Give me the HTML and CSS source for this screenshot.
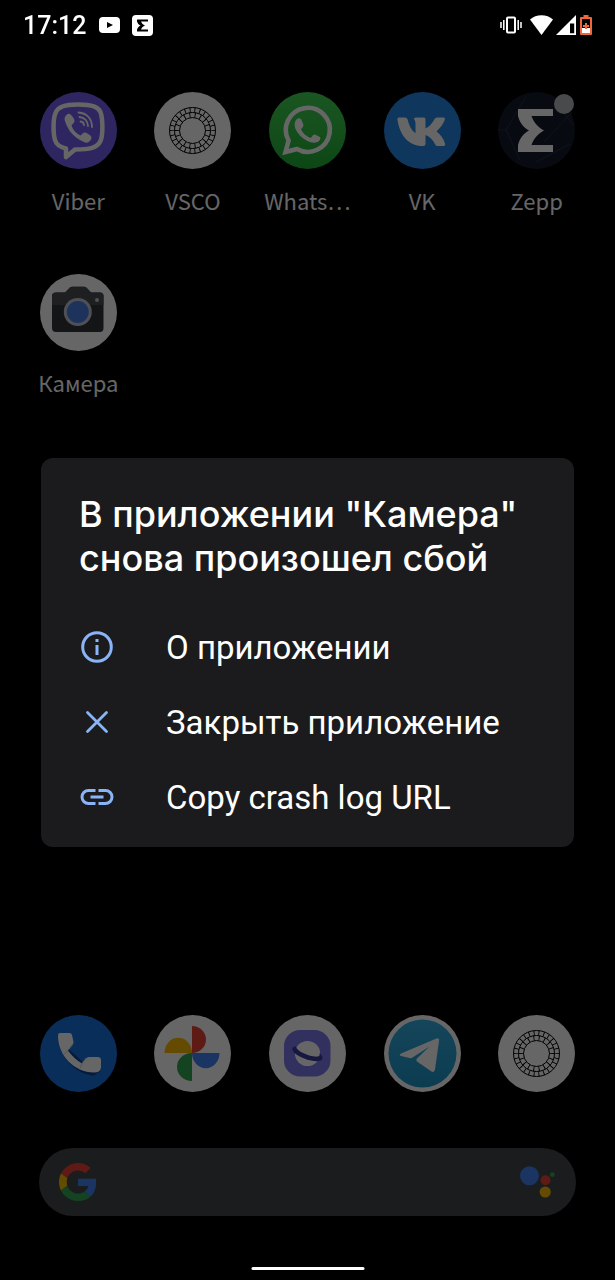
FILE: index.html
```html
<!DOCTYPE html>
<html lang="ru">
<head>
  <meta charset="UTF-8">
  <meta name="viewport" content="width=device-width, initial-scale=1">
  <title>Камера</title>
  <link rel="stylesheet" href="styles.css">
</head>
<body>
  <!-- shared shapes -->
  <svg class="defs" width="0" height="0" aria-hidden="true">
    <symbol id="vsco" viewBox="0 0 77 77">
      <circle cx="38.5" cy="38.5" r="38.5" fill="#fff"/>
      <g fill="none" stroke="#000" stroke-width="1">
        <circle cx="38.5" cy="38.5" r="23"/>
        <circle cx="38.5" cy="38.5" r="18"/>
        <circle cx="38.5" cy="38.5" r="13"/>
        <circle cx="38.5" cy="38.5" r="20.5" stroke-width="5" pathLength="260" stroke-dasharray="1.8 8.2" stroke-dashoffset="0.9"/>
        <circle cx="38.5" cy="38.5" r="15.5" stroke-width="5" pathLength="180" stroke-dasharray="1.7 8.3" stroke-dashoffset="0.8"/>
      </g>
    </symbol>
  </svg>

  <div class="home">
    <main class="apps">
      <button class="app">
        <svg class="icon" viewBox="0 0 77 77" aria-hidden="true">
          <circle cx="38.5" cy="38.5" r="38.5" fill="#7360f2"/>
          <path d="M38 12.500C53 12.500 58 15 60.500 20C63 27 63 43 60.500 49C57 56 50 57.500 35 57.500L26 65V56.500C20 55 16 52 15 48C13 41 13 27 15.500 21C18 15 24 12.500 38 12.500Z" fill="none" stroke="#fff" stroke-width="4.500" stroke-linejoin="round"/>
          <path d="M27 22.500C29 21 31 22 34 27C35.500 30 33 31.500 31.500 33.500C33 38 36 41.500 40.500 43.500C42.500 42 43.500 39.500 46.500 41C52 44 52 45.500 51 47.500C49.500 50.500 46.500 51.500 44 50C34 46 28 38.500 24.800 28.500C24 26 25 24 27 22.500Z" fill="#fff"/>
          <g fill="none" stroke="#fff" stroke-width="1.800" stroke-linecap="round">
            <path d="M38.500 20.500C46.500 21 52 26.500 52 35"/>
            <path d="M39.500 25C44.500 25.500 47.800 29 48 34"/>
            <path d="M40.500 29.500C42.800 29.700 43.800 31 44 33"/>
          </g>
        </svg>
        <span class="label">Viber</span>
      </button>
      <button class="app">
        <svg class="icon" aria-hidden="true"><use href="#vsco"/></svg>
        <span class="label">VSCO</span>
      </button>
      <button class="app">
        <svg class="icon" viewBox="0 0 77 77" aria-hidden="true">
          <defs>
            <linearGradient id="wa" x1="0" y1="0" x2="0" y2="1">
              <stop offset="0" stop-color="#43d854"/>
              <stop offset="1" stop-color="#22b038"/>
            </linearGradient>
          </defs>
          <circle cx="38.5" cy="38.5" r="38.5" fill="url(#wa)"/>
          <path d="M16.500 60L19.600 48.500A22 22 0 1 1 28 57Z" fill="none" stroke="#fff" stroke-width="4.600"/>
          <path d="M28 27C30 25.500 32 26.500 32.500 28L34.500 33C34.500 35 32.500 36 32 37.500C34 41.500 37.500 44.500 41.500 46C43.500 44.500 44 42 46 42.500L51 45C52 46 51 49 48.500 50C45 51.500 42 50.500 38.500 49C32.500 46 28.500 41 26.500 37C25 33 25.500 29 28 27Z" fill="#fff"/>
        </svg>
        <span class="label">Whats…</span>
      </button>
      <button class="app">
        <svg class="icon" viewBox="0 0 77 77" aria-hidden="true">
          <circle cx="38.5" cy="38.5" r="38.5" fill="#2787e5"/>
          <path d="M15 25.500H21Q23 25.500 23.600 27.500C25.500 35 28.500 39.500 31.500 41V31Q31.300 28 29.800 27Q30 25.500 32 25.500H40Q41.500 25.500 41.500 27.500V36.500C45 35 48.500 31 50.500 27Q51.200 25.500 53 25.500H59.500Q61.500 25.500 60.800 27.500C59.500 32 56 36 52.500 39.500C56 42 59.500 46.500 61 51.500Q61.800 54 59.500 54H53.500Q52 54 51.200 52.500C49 48 46 44.500 41.500 43V52Q41.500 54 39.500 54C26 54.500 16 45 13.400 27.500Q13.200 25.500 15 25.500Z" fill="#fff"/>
        </svg>
        <span class="label">VK</span>
      </button>
      <button class="app">
        <svg class="icon" viewBox="0 0 77 77" aria-hidden="true">
          <circle cx="38.5" cy="38.5" r="38.5" fill="#151b2c"/>
          <path d="M0 38H8L28 5M46 50L74 20M38 70L72 52M8 38L22 68M58 10L76 34" fill="none" stroke="#273047"/>
          <path d="M20 17H55V24H33.500C36 31 40 35 46 38.500C40 42 36 46 33.500 53H55V60H20V53C22 46 25 42 31 38.500C25 35 22 31 20 24Z" fill="#fff"/>
        </svg>
        <span class="dot"></span>
        <span class="label">Zepp</span>
      </button>
      <button class="app">
        <svg class="icon" viewBox="0 0 77 77" aria-hidden="true">
          <circle cx="38.5" cy="38.5" r="38.5" fill="#fff"/>
          <path d="M16 18.500H25L30 13.500Q31 12.800 32 12.800H44Q45.500 12.800 46.500 13.800L51 18.500H60Q63.500 18.500 63.500 22V54Q63.500 58 60 58H16Q12 58 12 54V22Q12 18.500 16 18.500Z" fill="#33363b"/>
          <path d="M16 18.500H25L30 13.500Q31 12.800 32 12.800H44Q45.500 12.800 46.500 13.800L51 18.500H60Q63.500 18.500 63.500 22V31H12V22Q12 18.500 16 18.500Z" fill="#4a4e53"/>
          <circle cx="37.800" cy="38" r="14" fill="#c3c9d4"/>
          <circle cx="37.800" cy="38" r="11" fill="#4a80e4"/>
          <circle cx="57" cy="26" r="2" fill="#c3c9d4"/>
        </svg>
        <span class="label">Камера</span>
      </button>
    </main>

    <nav class="dock" aria-label="Избранное">
      <button class="app" aria-label="Телефон">
        <svg class="icon" viewBox="0 0 77 77" aria-hidden="true">
          <circle cx="38.5" cy="38.5" r="38.5" fill="#1a73e0"/>
          <path d="M18 24C20 42 36 60 54 60.500L61 56L45 49Z" fill="#0d4796"/>
          <path d="M20 18H29.500Q31.500 18 32 20L33.500 27Q33.700 28.500 32.500 29.500L27.800 35.500C32 41 36 45 42 48.500L46 43.500Q47 42 49 42H57.500Q61 42 61 45V52Q61 57.500 54 57.500C34 57.500 18 40 18 21Q18 18 20 18Z" fill="#fff"/>
          <path d="M33 29L27.800 35.500L24.500 39M46 43L42 48.500L40 53" fill="none" stroke="#c9d3de"/>
        </svg>
      </button>
      <button class="app" aria-label="Google Фото">
        <svg class="icon" viewBox="0 0 77 77" aria-hidden="true">
          <circle cx="38.5" cy="38.5" r="38.5" fill="#fff"/>
          <path d="M38 11A14 13.500 0 0 1 38 38Z" fill="#ea4335"/>
          <path d="M38 38A13.500 15 0 0 0 10.500 38Z" fill="#fbbc04"/>
          <path d="M38 38A13.500 15 0 0 0 65.500 38Z" fill="#4285f4"/>
          <path d="M38 38A15 14 0 0 0 38 66Z" fill="#34a853"/>
        </svg>
      </button>
      <button class="app" aria-label="Интернет">
        <svg class="icon" viewBox="0 0 77 77" aria-hidden="true">
          <circle cx="38.5" cy="38.5" r="38.5" fill="#fff"/>
          <rect x="15" y="15" width="46.500" height="46.500" rx="16" fill="#7a78ee"/>
          <circle cx="38.500" cy="38.500" r="12.600" fill="#fff"/>
          <path d="M27 31.500C22 31 21.500 36 29 40.500C38 46 52.500 48.500 53.500 43.500Q53.800 41 50.500 38C51.500 41.500 49 42 45.500 41.500C38 40.500 27.500 36 27 31.500Z" fill="#3b3c9e"/>
        </svg>
      </button>
      <button class="app" aria-label="Telegram">
        <svg class="icon" viewBox="0 0 77 77" aria-hidden="true">
          <defs>
            <linearGradient id="tg" x1="0" y1="0" x2="0" y2="1">
              <stop offset="0" stop-color="#37aee2"/>
              <stop offset="1" stop-color="#1e96c8"/>
            </linearGradient>
          </defs>
          <circle cx="38.5" cy="38.5" r="38.5" fill="#fff"/>
          <circle cx="38.5" cy="38.500" r="34" fill="url(#tg)"/>
          <path d="M17 38.500L52.500 23.500Q55.500 22.500 55 26L51 54.500Q50.300 58 47.500 56.500L33 46.500Q31.500 45 33 43.500L45.500 31.500L28.500 42.500Q27 43.500 25.500 43L17 41Q14.500 40 17 38.500Z" fill="#fff"/>
        </svg>
      </button>
      <button class="app" aria-label="VSCO">
        <svg class="icon" aria-hidden="true"><use href="#vsco"/></svg>
      </button>
    </nav>

    <div class="search">
      <button aria-label="Google Поиск">
        <svg width="38" height="38" viewBox="0 0 48 48" aria-hidden="true">
          <path fill="#ea4335" d="M24 9.500c3.540 0 6.710 1.220 9.210 3.600l6.850-6.850C35.900 2.380 30.470 0 24 0 14.620 0 6.510 5.380 2.560 13.220l7.980 6.190C12.430 13.720 17.740 9.500 24 9.500z"/>
          <path fill="#4285f4" d="M46.980 24.550c0-1.570-.15-3.090-.38-4.550H24v9.020h12.940c-.58 2.960-2.260 5.480-4.780 7.180l7.730 6c4.510-4.180 7.090-10.360 7.090-17.650z"/>
          <path fill="#fbbc05" d="M10.530 28.590c-.48-1.450-.76-2.990-.76-4.590s.27-3.140.76-4.590l-7.980-6.190C.92 16.460 0 20.120 0 24c0 3.880.92 7.540 2.560 10.780l7.970-6.190z"/>
          <path fill="#34a853" d="M24 48c6.480 0 11.930-2.130 15.890-5.810l-7.730-6c-2.150 1.450-4.920 2.300-8.160 2.300-6.260 0-11.570-4.220-13.470-9.910l-7.980 6.190C6.510 42.620 14.620 48 24 48z"/>
        </svg>
      </button>
      <button aria-label="Google Ассистент">
        <svg width="36" height="36" viewBox="0 0 36 36" aria-hidden="true">
          <circle cx="9.500" cy="11.700" r="9.500" fill="#4285f4"/>
          <circle cx="25.500" cy="16.300" r="5" fill="#ea4335"/>
          <circle cx="32.300" cy="10.700" r="2.400" fill="#34a853"/>
          <circle cx="25.200" cy="28" r="5.600" fill="#fbbc04"/>
        </svg>
      </button>
    </div>
  </div>

  <div class="scrim">
    <section class="dialog" role="dialog" aria-labelledby="dialog-title">
      <h1 id="dialog-title">В приложении "Камера" снова произошел сбой</h1>
      <button class="action">
        <svg viewBox="0 0 36 36" aria-hidden="true">
          <circle cx="18" cy="18" r="14.300" fill="none" stroke="#8ab4f8" stroke-width="3"/>
          <path d="M16.500 10h3v3h-3zM16.500 16h3v10h-3z" fill="#8ab4f8"/>
        </svg>
        О приложении
      </button>
      <button class="action">
        <svg viewBox="0 0 36 36" aria-hidden="true">
          <path d="M8.500 8.500l19 19M27.500 8.500l-19 19" stroke="#8ab4f8" stroke-width="2.800" stroke-linecap="round"/>
        </svg>
        Закрыть приложение
      </button>
      <button class="action">
        <svg viewBox="0 0 36 36" aria-hidden="true">
          <path d="M16.500 11.500H9.500a6.500 6.500 0 0 0 0 13H16.500M19.500 11.500H26.500a6.500 6.500 0 0 1 0 13H19.500M11.500 18H24.500" fill="none" stroke="#8ab4f8" stroke-width="3"/>
        </svg>
        Copy crash log URL
      </button>
    </section>
  </div>

  <header class="status">
    <time>17:12</time>
    <svg width="21" height="16" viewBox="0 0 21 16" aria-hidden="true">
      <rect width="21" height="16" rx="4" fill="#fff"/>
      <path d="M8 5l6 3-6 3z" fill="#000"/>
    </svg>
    <svg class="zepp" width="21" height="21" viewBox="0 0 21 21" aria-hidden="true">
      <rect width="21" height="21" rx="4" fill="#fff"/>
      <path d="M5 4.500h11v2h-7c.8 2 2 3.200 4 4-2 .8-3.200 2-4 4h7v2H5v-2c.8-2 1.500-3 3.500-4-2-1-2.700-2-3.500-4z" fill="#000"/>
    </svg>
    <div class="tray">
      <svg width="22" height="18" viewBox="0 0 22 18" aria-hidden="true">
        <path d="M1 6v6M3.800 4v10M18.200 4v10M21 6v6" stroke="#fff" stroke-width="1.500"/>
        <rect x="7" y="1.500" width="8" height="15" rx="1" fill="none" stroke="#fff" stroke-width="2"/>
      </svg>
      <svg class="wifi" width="23" height="20" viewBox="0 0 23 20" aria-hidden="true">
        <path d="M0 4.500C6-1.200 17-1.200 23 4.500L11.500 20z" fill="#fff"/>
      </svg>
      <svg width="20" height="20" viewBox="0 0 20 20" aria-hidden="true">
        <path d="M0 20L20 0V20zM14 8.500V18.300H18.200V8.500z" fill="#fff" fill-rule="evenodd"/>
      </svg>
      <svg class="battery" width="12" height="20" viewBox="0 0 12 20" aria-hidden="true">
        <path d="M1 2h2.500V0h5v2H11q1 0 1 1v16q0 1-1 1H1q-1 0-1-1V3q0-1 1-1z" fill="#f0673c"/>
        <path d="M2 4h8v9H2z" fill="#000"/>
        <path d="M2 13h8v5H2z" fill="#fff"/>
        <path d="M6 8v6M3 11h6" stroke="#f0673c" stroke-width="2"/>
      </svg>
    </div>
  </header>
  <div class="pill"></div>
</body>
</html>
```

FILE: styles.css
```css
/* Base page styles */
* {
  box-sizing: border-box;
}
body {
  margin: 0;
  background: #000;
  color: #fff;
  font-family: Roboto, sans-serif;
}
button {
  border: 0;
  padding: 0;
  background: none;
  color: inherit;
  font: inherit;
  cursor: pointer;
}
svg {
  display: block;
  flex: none;
}
.defs {
  position: absolute;
}

/* Home screen */
.home {
  display: flex;
  flex-direction: column;
  min-height: 100vh;
  padding: 92px 21px 64px;
}
.apps, .dock {
  display: grid;
  grid-template-columns: repeat(5, 1fr);
  row-gap: 58px;
}
.dock {
  margin-top: auto;
}
.app {
  position: relative;
  display: flex;
  flex-direction: column;
  align-items: center;
  gap: 15px;
}
.icon {
  width: 77px;
  height: 77px;
}
.label {
  font-family: "Noto Sans CJK SC", "Noto Sans", sans-serif;
  font-size: 22px;
  line-height: 32px;
}
.dot {
  position: absolute;
  top: 2px;
  right: 20px;
  width: 20px;
  height: 20px;
  border-radius: 50%;
  background: #b4b8bd;
}

/* Search bar */
.search {
  display: flex;
  align-items: center;
  justify-content: space-between;
  height: 68px;
  margin: 56px 18px 0;
  padding: 0 20px;
  border-radius: 34px;
  background: #43474a;
}

/* Dialog */
.scrim {
  position: fixed;
  inset: 0;
  display: flex;
  align-items: center;
  justify-content: center;
  padding: 25px 41px 0;
  background: rgba(0,0,0,0.6);
}
.dialog {
  width: 100%;
  max-width: 720px;
  padding: 34px 38px 12px;
  border-radius: 12px;
  background: #1b1b1d;
}
.dialog h1 {
  margin: 0 0 30px;
  font-family: Inter, sans-serif;
  font-size: 36px;
  font-weight: 500;
  line-height: 44px;
}
.action {
  display: flex;
  align-items: center;
  gap: 51px;
  width: 100%;
  height: 75px;
  font-size: 33px;
  text-align: left;
}
.action svg {
  width: 36px;
  height: 36px;
  margin-bottom: 2px;
}

/* System bars */
.status {
  position: fixed;
  top: 0;
  left: 0;
  right: 0;
  display: flex;
  align-items: center;
  height: 50px;
  padding: 0 23px;
}
.status time {
  margin-right: 13px;
  font-size: 25px;
  font-weight: 500;
}
.zepp {
  margin-left: 12px;
}
.tray {
  display: flex;
  align-items: center;
  margin-left: auto;
}
.wifi {
  margin: 0 3px 0 8px;
}
.battery {
  margin-left: 4px;
}
.pill {
  position: fixed;
  bottom: 10px;
  left: 50%;
  width: 113px;
  height: 3px;
  border-radius: 2px;
  background: #fff;
  transform: translateX(-50%);
}
```
